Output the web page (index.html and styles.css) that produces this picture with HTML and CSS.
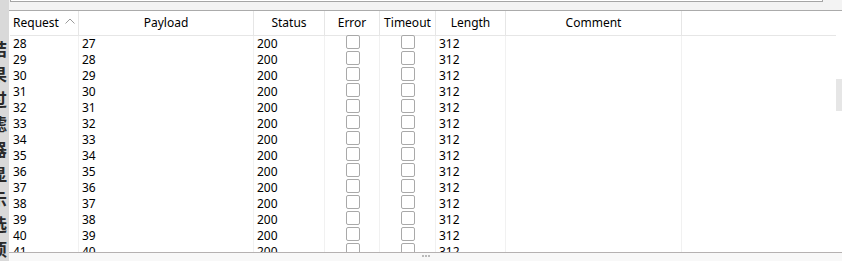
FILE: index.html
```html
<!DOCTYPE html>
<html lang="en">
<head>
    <meta charset="UTF-8">
    <title>Intruder results</title>
    <link rel="stylesheet" href="styles.css">
</head>
<body>
    <div class="window">
        <div class="side">
            <div class="side-text">结<br>果<br>过<br>滤<br>器<br>显<br>示<br>选<br>项<br>设<br>置<br>保<br>存</div>
        </div>
        <div class="main">
            <div class="topbar"><div class="field"></div></div>
            <div class="grid-area">
                <div class="table">
                    <div class="row head">
                        <div class="cell c">Request<svg class="sort" width="10" height="6" viewBox="0 0 10 6"><path d="M0.5 5.5 L5 1 L9.5 5.5" fill="none" stroke="#9a9a9a" stroke-width="1"/></svg></div>
                        <div class="cell c">Payload</div>
                        <div class="cell c">Status</div>
                        <div class="cell c">Error</div>
                        <div class="cell c">Timeout</div>
                        <div class="cell c">Length</div>
                        <div class="cell c">Comment</div>
                        <div class="cell"></div>
                    </div>
                    <div id="rows"></div>
                </div>
                <div class="scroll"><div class="thumb"></div></div>
            </div>
            <div class="splitter"><span></span><span></span><span></span></div>
        </div>
    </div>
    <script>
        var html = '';
        for (var r = 28; r <= 42; r++) {
            html += '<div class="row">' +
                '<div class="cell">' + r + '</div>' +
                '<div class="cell">' + (r - 1) + '</div>' +
                '<div class="cell">200</div>' +
                '<div class="cell box"><i class="check"></i></div>' +
                '<div class="cell box"><i class="check"></i></div>' +
                '<div class="cell">312</div>' +
                '<div class="cell"></div>' +
                '<div class="cell"></div>' +
                '</div>';
        }
        document.getElementById('rows').innerHTML = html;
    </script>
</body>
</html>
```

FILE: styles.css
```css
body {
    margin: 0;
    font-family: "Noto Sans", "Noto Sans CJK SC", sans-serif;
    font-size: 12px;
    color: #000;
    background: #fff;
}
.window {
    display: flex;
    width: 842px;
    height: 261px;
    overflow: hidden;
}
.side {
    width: 9px;
    flex: none;
    background: #d9d9d9;
    overflow: hidden;
}
.side-text {
    margin-left: -10px;
    padding-top: 36px;
    font-family: "Noto Sans CJK SC", sans-serif;
    font-weight: bold;
    font-size: 17px;
    line-height: 25px;
    color: #2a2a2a;
}
.main {
    flex: 1;
    display: flex;
    flex-direction: column;
    min-width: 0;
}
.topbar {
    height: 10px;
    background: #f3f3f3;
    border-bottom: 1px solid #ababab;
    padding-left: 1px;
}
.field {
    width: 811px;
    height: 1px;
    background: #fff;
    border: 1px solid #a5a5a5;
    border-top: none;
}
.grid-area {
    flex: 1;
    display: flex;
    overflow: hidden;
}
.table {
    flex: 1;
    padding-left: 1px;
}
.row {
    display: grid;
    grid-template-columns: 69px 175px 71px 55px 56px 70px 176px 1fr;
    height: 16px;
    line-height: 16px;
}
.row .cell {
    border-right: 1px solid #f1f1f1;
    padding-left: 3px;
    white-space: nowrap;
    overflow: hidden;
}
.row .cell:last-child {
    border-right: none;
}
.head {
    height: 24px;
    line-height: 24px;
    border-bottom: 1px solid #e6e6e6;
}
.head .cell {
    border-right-color: #e6e6e6;
}
.cell.c {
    text-align: center;
    padding-left: 0;
}
.sort {
    margin-left: 6px;
    vertical-align: 3px;
}
.cell.box {
    display: flex;
    justify-content: center;
    padding-left: 1px;
    overflow: visible;
}
.check {
    display: block;
    width: 12px;
    height: 12px;
    margin-top: -1px;
    border: 1px solid #a9a9a9;
    border-radius: 2px;
    background: #fff;
    box-sizing: content-box;
}
.scroll {
    width: 6px;
    flex: none;
    padding-top: 68px;
}
.thumb {
    height: 32px;
    background: #e6e6e6;
}
.splitter {
    height: 6px;
    border-top: 1px solid #b5b1b1;
    background: #f8f8f8;
    display: flex;
    justify-content: center;
    gap: 1px;
    padding-top: 2px;
}
.splitter span {
    width: 2px;
    height: 2px;
    background: #a6a6a6;
    border-radius: 1px;
}
```
